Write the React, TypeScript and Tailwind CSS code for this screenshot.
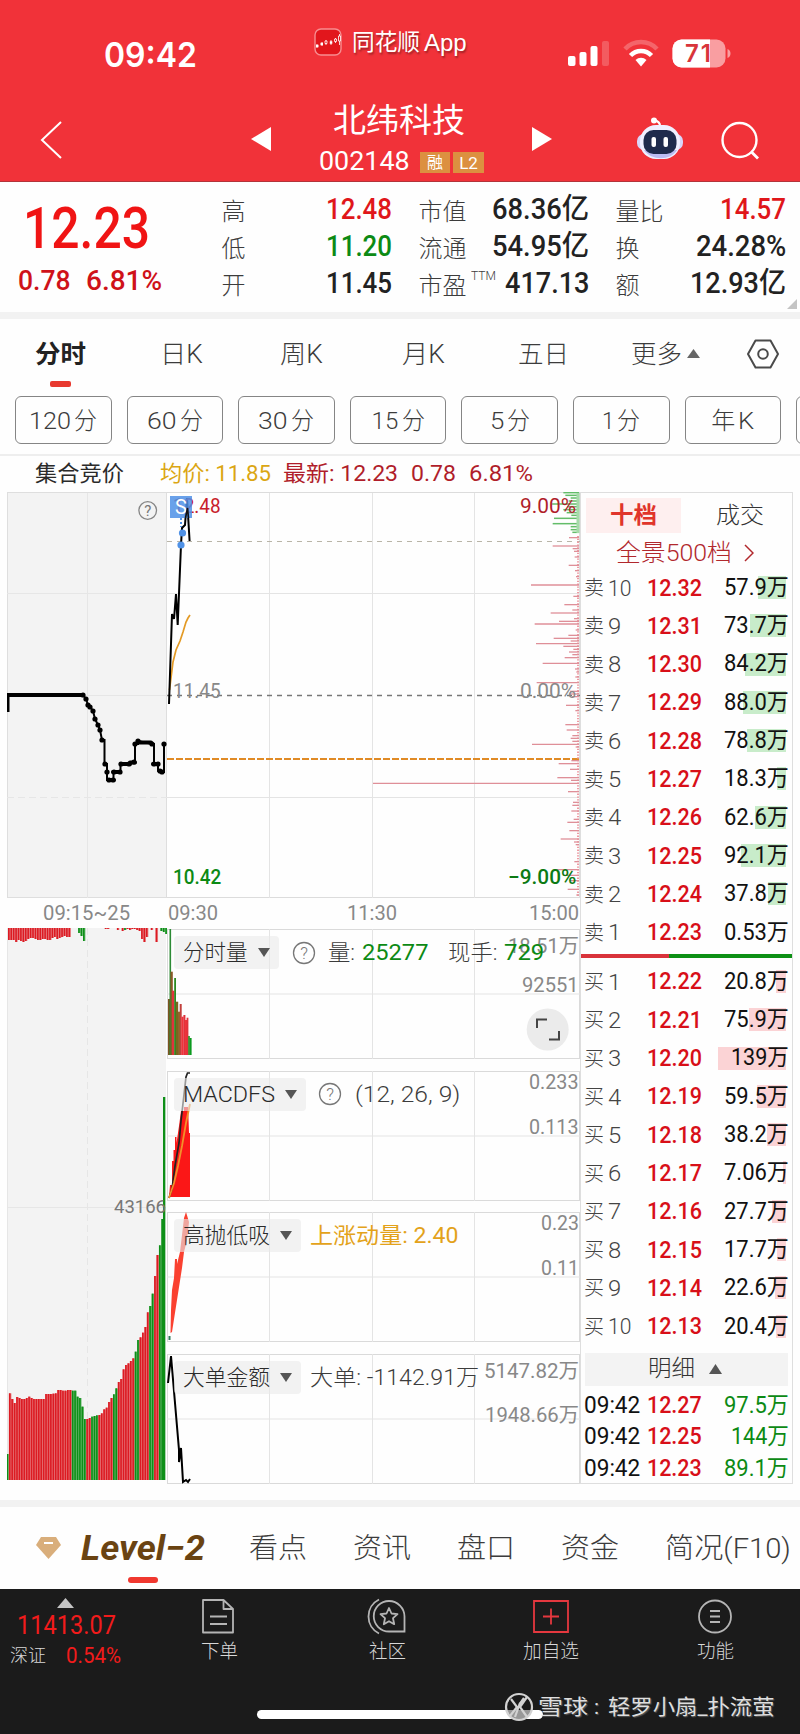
import { useLayoutEffect, useRef, useState, type ReactNode } from "react";
import clsx from "clsx";

const GRID = "#e4e4e4";

// text squeezed or stretched horizontally to a fixed width
function Fit({ w, className, children }: { w: number; className?: string; children: ReactNode }) {
  const ref = useRef<HTMLSpanElement>(null);
  const [scale, setScale] = useState(1);

  useLayoutEffect(() => {
    if (ref.current) setScale(w / ref.current.offsetWidth);
  }, [w, children]);

  return (
    <span className={clsx("block shrink-0 whitespace-nowrap", className)} style={{ width: w }}>
      <span ref={ref} className="inline-block origin-left" style={{ transform: `scaleX(${scale})` }}>
        {children}
      </span>
    </span>
  );
}

function Header() {
  return (
    <header className="h-[182px] shrink-0 bg-[#f13239] border-b border-[#b3343a] text-white">
      <div className="h-[95px] flex items-start">
        <Fit w={93} className="ml-[104px] mt-[35px] text-[34px] leading-[40px] font-semibold font-[Inter]">09:42</Fit>
        <svg className="ml-[117px] mt-[28px]" width="28" height="28" viewBox="0 0 28 28">
          <rect x="1" y="1" width="26" height="26" rx="6" fill="#e2161c" stroke="#f78d90" strokeWidth="1.4" />
          <path d="M3 16v4M8 14v4M12 12v5M17 12v5M21.500 10v5M25.500 6v11" stroke="#fff" strokeWidth=".8" />
          <path d="M2 18h2.500M6.500 16h2.500M15.800 14.500h2.500" stroke="#fff" strokeWidth="2.600" />
          <path d="M11 13h2v2.500h-2zM20.500 11h2v2.500h-2zM24.500 8h2v5h-2z" fill="#e2161c" stroke="#fff" strokeWidth=".8" />
        </svg>
        <div className="ml-[10px] mt-[28px] flex items-center leading-[30px] [text-shadow:1px_2px_2px_rgba(0,0,0,.35)]">
          <Fit w={68} className="text-[23px]">同花顺</Fit>
          <Fit w={43} className="ml-1 text-[24px] font-['Liberation_Sans']">App</Fit>
        </div>
        <svg className="ml-[101px] mt-[39px]" width="164" height="29" viewBox="0 0 164 29">
          <g fill="#fff">
            <rect x="0" y="17" width="7.500" height="10" rx="2" />
            <rect x="11.500" y="13" width="7" height="14" rx="2" />
            <rect x="22.500" y="7" width="7" height="20" rx="2" />
            <rect x="34" y="2" width="7" height="25" rx="2" opacity=".2" />
          </g>
          <path d="M57 10a22 22 0 0 1 32 0" fill="none" stroke="#fff" strokeWidth="4.500" opacity=".25" />
          <path d="M62.500 16.500a14.500 14.500 0 0 1 21 0" fill="none" stroke="#fff" strokeWidth="4.500" />
          <path d="M73 27.500l-5.500-6.500a8 8 0 0 1 11 0z" fill="#fff" />
          <rect x="104.500" y="0.500" width="53" height="28" rx="9" fill="#f99ea1" />
          <path d="M113.500 .5h28.500v28h-28.500a9 9 0 0 1-9-9v-10a9 9 0 0 1 9-9z" fill="#fff" />
          <path d="M159.500 10c4 1 4 8 0 9z" fill="#f99ea1" />
          <text x="117" y="23" fontFamily="Inter" fontWeight="600" fontSize="24" textLength="26" fill="#d8353b">71</text>
        </svg>
      </div>
      <div className="h-[86px] flex items-center">
        <svg className="ml-[40px] mt-[4px]" width="24" height="40" viewBox="0 0 24 40" fill="none" stroke="#fff" strokeWidth="2">
          <path d="M21 2L2 20l19 18" />
        </svg>
        <svg className="ml-[187px] mt-[2px]" width="21" height="26" viewBox="0 0 21 26"><path d="M20 1v24L0 13z" fill="#fff" /></svg>
        <div className="ml-[47px] w-[166px]">
          <Fit w={132} className="ml-[14px] text-[33px] leading-[44px]">北纬科技</Fit>
          <div className="mt-[3px] flex items-center h-[31px]">
            <Fit w={91} className="text-[26px]">002148</Fit>
            <span className="ml-[10px] mt-[2px] w-[30px] h-[21px] bg-[#dc9040] text-[16px] leading-[21px] text-center">融</span>
            <span className="ml-[3px] mt-[2px] w-[31px] h-[21px] bg-[#dc9040] text-[17px] leading-[22px] text-center">L2</span>
          </div>
        </div>
        <svg className="ml-[46px] mt-[2px]" width="21" height="26" viewBox="0 0 21 26"><path d="M1 1v24l20-12z" fill="#fff" /></svg>
        <svg className="ml-[84px] mt-[1px]" width="48" height="44" viewBox="0 0 48 44">
          <path d="M24 9c0-3-2-5-6-6" fill="none" stroke="#fff" strokeWidth="2.200" />
          <circle cx="18" cy="3.500" r="3" fill="#fff" />
          <rect x="1" y="17" width="46" height="16" rx="7" fill="#d9d6fa" />
          <rect x="4" y="8" width="40" height="34" rx="16" fill="#f0f0ff" />
          <path d="M8 33c7 11 27 11 33 0z" fill="#bcbcf2" />
          <rect x="7.500" y="13" width="33" height="24" rx="10" fill="#1f2b4c" />
          <rect x="15.500" y="20" width="4.500" height="10" rx="2" fill="#fff" />
          <rect x="27.500" y="20" width="4.500" height="10" rx="2" fill="#fff" />
        </svg>
        <svg className="ml-[35px] mt-[5px]" width="42" height="42" viewBox="0 0 42 42" fill="none" stroke="#fff" strokeWidth="2.400">
          <circle cx="20.500" cy="20" r="17" />
          <path d="M32 31.500l7 7" strokeWidth="2.800" />
        </svg>
      </div>
    </header>
  );
}

type Stat = { label: string; value: string; w: number; tone?: string; sup?: boolean };
const STATS: Stat[][] = [
  [
    { label: "高", value: "12.48", w: 66, tone: "text-[#e0161a]" },
    { label: "低", value: "11.20", w: 66, tone: "text-[#0c8a14]" },
    { label: "开", value: "11.45", w: 66 },
  ],
  [
    { label: "市值", value: "68.36亿", w: 97 },
    { label: "流通", value: "54.95亿", w: 97 },
    { label: "市盈", value: "417.13", w: 84, sup: true },
  ],
  [
    { label: "量比", value: "14.57", w: 66, tone: "text-[#e0161a]" },
    { label: "换", value: "24.28%", w: 90 },
    { label: "额", value: "12.93亿", w: 96 },
  ],
];

function Quote() {
  return (
    <section className="relative h-[130px] shrink-0 flex">
      <div className="w-[223px] pl-[18px]">
        <Fit w={127} className="ml-[5px] mt-[15px] text-[58px] leading-[62px] font-medium text-[#f01414]">12.23</Fit>
        <div className="mt-[6px] flex text-[28px] leading-[32px] font-medium text-[#cf1219]">
          <Fit w={53}>0.78</Fit>
          <Fit w={76} className="ml-[15px]">6.81%</Fit>
        </div>
      </div>
      <div className="flex gap-7 pt-[9px]">
        {STATS.map((col, i) => (
          <div key={i} className="w-[169px]">
            {col.map((s) => (
              <div key={s.label} className="h-[37px] flex items-center justify-between">
                <span className="-ml-[1.500px] mt-[4px] text-[24px] leading-[30px] text-[#3c3c3c] font-light flex">
                  {s.label}
                  {s.sup && <Fit w={25} className="ml-[4px] -mt-[10px] text-[13px]">TTM</Fit>}
                </span>
                <Fit w={s.w} className={clsx("text-[29px] leading-[37px] font-medium", s.tone ?? "text-[#222]")}>{s.value}</Fit>
              </div>
            ))}
          </div>
        ))}
      </div>
      <svg className="absolute right-[3px] bottom-[3px]" width="10" height="10" viewBox="0 0 10 10"><path d="M10 0v10H0z" fill="#c4c4c4" /></svg>
    </section>
  );
}

const PERIODS = [
  { num: "120", unit: "分", w: 42 },
  { num: "60", unit: "分", w: 30 },
  { num: "30", unit: "分", w: 30 },
  { num: "15", unit: "分", w: 27 },
  { num: "5", unit: "分", w: 14 },
  { num: "1", unit: "分", w: 12 },
];

function Periods() {
  return (
    <section className="shrink-0 border-t-[7px] border-[#f2f2f2] text-[#3c3c3c]">
      <div className="relative h-[77px] flex items-start pt-[19px] text-[25px] leading-[34px] font-light">
        <Fit w={51} className="ml-[35px] font-bold text-[#222]">分时</Fit>
        <Fit w={43} className="ml-[74px]">日K</Fit>
        <Fit w={43} className="ml-[77px]">周K</Fit>
        <Fit w={43} className="ml-[79px]">月K</Fit>
        <Fit w={51} className="ml-[73px]">五日</Fit>
        <Fit w={51} className="ml-[62px]">更多</Fit>
        <svg className="ml-[5px] mt-[11px]" width="13" height="9" viewBox="0 0 13 9"><path d="M6.500 0L13 9H0z" fill="#666" /></svg>
        <svg className="ml-[46px]" width="34" height="32" viewBox="0 0 34 32" fill="none" stroke="#4a4a4a" strokeWidth="2">
          <path d="M9.500 2.500h15L32 16l-7.500 13.500h-15L2 16z" strokeLinejoin="round" />
          <circle cx="17" cy="16" r="4.800" />
        </svg>
        <span className="absolute left-[50px] top-[62px] w-[21px] h-[6px] rounded-[2px] bg-[#e8392f]" />
      </div>
      <div className="h-[58px] pl-[15px] flex gap-[15px] overflow-hidden">
        {PERIODS.map((p) => (
          <div key={p.num} className="w-[96.600px] h-[48px] pt-[1px] shrink-0 flex items-center justify-center gap-[3px] rounded-md border border-[#858585] text-[24px] font-light">
            <Fit w={p.w}>{p.num}</Fit>
            <Fit w={23}>{p.unit}</Fit>
          </div>
        ))}
        <div className="w-[96.600px] h-[48px] pt-[1px] shrink-0 flex items-center justify-center gap-[3px] rounded-md border border-[#858585] text-[24px] font-light">
          <Fit w={24}>年</Fit>
          <Fit w={16}>K</Fit>
        </div>
        <div className="w-[96px] h-[48px] shrink-0 rounded-md border border-[#858585]" />
      </div>
      <div className="h-[38px] flex items-center border-t-2 border-[#eeeeee] text-[22px] leading-[36px]">
        <Fit w={89} className="ml-[35px] text-[#2a2a2a]">集合竞价</Fit>
        <Fit w={111} className="ml-[36px] text-[#dba613]">均价: 11.85</Fit>
        <Fit w={115} className="ml-[12px] text-[#b01d2a]">最新: 12.23</Fit>
        <Fit w={45} className="ml-[13px] text-[#b01d2a]">0.78</Fit>
        <Fit w={64} className="ml-[13px] text-[#b01d2a]">6.81%</Fit>
      </div>
    </section>
  );
}

// coordinates inside chart drawings are page pixels; each svg shifts them with its viewBox
const AUCTION_DOTS = [
  [83, 695], [86, 699], [88, 705], [90, 707], [93, 711], [95, 719], [98, 725], [100, 730], [102, 740], [105, 764],
  [107, 772], [109, 780], [113, 780], [114, 772], [120, 772], [121, 764], [129, 764], [134, 762], [135, 744], [138, 741],
  [152, 744], [154, 764], [158, 764], [160, 771], [162, 772], [164, 744],
];

function AuctionPrice() {
  return (
    <svg className="block" width="160" height="406" viewBox="7 492 160 406">
      <rect x="7" y="493" width="160" height="405" fill="#f3f3f3" />
      <g stroke="#e6e6e6" fill="none">
        <path d="M7 492.500H167M7.500 493V898M166.500 493V898M7 897.500H167" stroke="#dedede" />
        <path d="M7 593.500H167M7 695.500H167M87.500 493V898" />
        <path d="M7 797.500H167" strokeDasharray="7 4" />
      </g>
      <circle cx="147.700" cy="510.500" r="8.800" fill="none" stroke="#858585" strokeWidth="1.300" />
      <text x="147.700" y="516" textAnchor="middle" fontSize="15" fontFamily="Roboto" fill="#777">?</text>
      <path d="M8 712V695" stroke="#000" strokeWidth="3" />
      <path d="M7 695H83" stroke="#000" strokeWidth="4" />
      <path
        d="M83 695L86 699 88 705 90 707 93 711 95 719 98 725 100 730 102 740H104.500V764H107V772 780H113.500V772H120.500V764H129L135 762V744H138V741L152 744H154V764H158V771L162 772H164V744"
        fill="none" stroke="#000" strokeWidth="2"
      />
      <path d="M109 780h5M113 772h7M121 764h9M130 762.500h5M138 742.500h13M153 764h5" stroke="#000" strokeWidth="4" strokeLinecap="round" />
      {AUCTION_DOTS.map(([x, y], i) => (
        <circle key={i} cx={x} cy={y} r="2.600" />
      ))}
    </svg>
  );
}

const R = "#dc1a22";
const G = "#0d8f17";
// bar tops in thirds of a pixel, each with its colour letter
const AUCTION_TOPS =
  "762g 580r 597r 609r 591r 594r 597r 597r 594r 590r 594r 597r 597r 597r 597r 597r 582r 582r 582r 581r 580r 570r 570r 572r 572r 570r 570r 572g 572g 590g 594g 620g 657g 657r 654r 650g 648g 646g 645r 640r 628r 623r 606r 594r 583g 565g 546r 537r 508r 495r 490r 483r 475r 455g 420g 412r 398r 381r 337r 318g 281g 228r 165r 136g 57g";
const AUCTION_BARS = AUCTION_TOPS.split(" ").map((s, i) => ({
  x: 6.5 + i * 2.42,
  y: 1200 + parseInt(s) / 3,
  color: s.endsWith("g") ? G : R,
}));
const UNMATCHED = [
  12, 12, 12, 14, 12, 13, 14, 13, 11, 10, 10, 11, 12, 12, 11, 11, 12, 12, 10, 9, 11, 10, 9, 8, 9, 9,
  0, 0, 0, 5, 8, 13, 0, 0, 0, 0, 0, 0, 0, 0, 1, 1, 0, 0, 0, 2, 0, 3, 2, 1, 2, 1, 1, 2, 3, 11, 14, 9, 0, 2, 0, 14, 0, 3, 4, 6,
];
const unmatchedGreen = (i: number) => (i > 28 && i < 33) || i === 48 || i > 61;

function AuctionVolume() {
  return (
    <div className="relative">
      <svg className="block" width="160" height="556" viewBox="7 928 160 556">
        <rect x="7" y="928" width="159" height="552" fill="#f3f3f3" />
        <path d="M7.500 928V1480M7 1207.500H166" stroke="#e6e6e6" />
        <path d="M87.500 928V1480" stroke="#e6e6e6" strokeDasharray="7 4" />
        {UNMATCHED.map((h, i) => (
          <g key={i} fill={unmatchedGreen(i) ? G : R}>
            <rect x={8 + i * 2.42} y="928" width="2.420" height={h} opacity=".5" />
            <rect x={8 + i * 2.42} y="928" width="1.600" height={h} />
          </g>
        ))}
        {AUCTION_BARS.map((b, i) => (
          <g key={i} fill={b.color}>
            <rect x={b.x} y={b.y} width="2.420" height={1480 - b.y} opacity=".6" />
            <rect x={b.x} y={b.y} width="1.600" height={1480 - b.y} />
          </g>
        ))}
        <rect x="163" y="1097" width="2.300" height="383" fill={G} />
      </svg>
      <Fit w={52} className="absolute left-[107px] top-[267px] text-[18.500px] leading-[24px] text-[#777]">43166</Fit>
    </div>
  );
}

// price distribution ticks: [y, left edge], measured in thirds of a pixel
const SELL_TICKS = [[38, 850], [46, 856], [54, 872], [63, 866], [72, 815], [80, 862], [89, 850], [98, 860], [106, 874], [115, 822], [131, 818], [140, 872], [149, 872], [157, 877]];
const BUY_TICKS = [
  [173, 867], [198, 818], [206, 878], [214, 882], [231, 884], [256, 866], [272, 885], [290, 888], [315, 753], [349, 880],
  [374, 853], [390, 877], [399, 812], [416, 882], [424, 837], [432, 764], [450, 887], [466, 865], [475, 821], [483, 872],
  [491, 768], [499, 850], [508, 880], [516, 867], [524, 877], [533, 854], [550, 788], [567, 885], [576, 889], [591, 886],
  [608, 770], [634, 870], [642, 868], [650, 876], [676, 858], [692, 886], [734, 856], [750, 860], [767, 877], [775, 872],
  [784, 877], [793, 756], [801, 887], [842, 874], [851, 836], [868, 870], [893, 832], [901, 873], [910, 279], [935, 864],
  [967, 879], [976, 877], [993, 874], [1018, 881], [1027, 862], [1052, 868], [1077, 842], [1086, 882], [1094, 887],
  [1145, 883], [1169, 824], [1186, 850], [1202, 870], [1228, 863], [1245, 889],
];

function PriceChart() {
  return (
    <div className="relative h-[406px]">
      <svg className="block" width="413" height="406" viewBox="167 492 413 406">
        <path d="M167 492.500H580M167 897.500H580M579.500 492V898" stroke="#dcdcdc" fill="none" />
        <path d="M167 593.500H580M167 797.500H580M269.500 493V898M372.500 493V898M474.500 493V898" stroke={GRID} fill="none" />
        <path d="M167 541.500H580" stroke="#b9b5a8" strokeWidth="1.200" strokeDasharray="5 5" />
        <path d="M167 695.500H580" stroke="#777" strokeWidth="1.300" strokeDasharray="5 5" />
        <path d="M167 759H580" stroke="#e08a25" strokeWidth="2" strokeDasharray="7 2" />
        {SELL_TICKS.map(([y, x]) => (
          <path key={y} d={`M${280 + x / 3} ${480 + y / 3}H579`} stroke="#63bd69" strokeWidth="1.500" />
        ))}
        <path d="M578 493V533" stroke="#a5dba8" strokeWidth="3" />
        <path d="M578 536V896" stroke="#ee9aa2" strokeWidth="2" strokeDasharray="1.300 1.500" />
        {BUY_TICKS.map(([y, x]) => (
          <path key={y} d={`M${280 + x / 3} ${480 + y / 3}H579`} stroke="#df8f98" strokeWidth="1.300" />
        ))}
        <path d="M169.500 690L173 662 176 650 180 641 183 632 186 622 188 618 190 615" fill="none" stroke="#e39a25" strokeWidth="1.700" />
        <path d="M169 704L172 614 174 619 176 594 177.700 625 181 545 182 528 185 525 187 498 189.600 541" fill="none" stroke="#000" strokeWidth="2" />
        <circle cx="182.500" cy="533" r="3.600" fill="#4f91e6" />
        <circle cx="181" cy="545" r="3.600" fill="#4f91e6" />
        <path d="M181 518v9" stroke="#4f91e6" strokeWidth="2" strokeDasharray="2 2" />
      </svg>
      <Fit w={48} className="absolute left-[6px] top-[1px] text-[20.500px] leading-[26px] text-[#c8202b]">12.48</Fit>
      <span className="absolute left-[3px] top-[4px] w-[22px] h-[22px] bg-[#4f91e6]/85 text-white text-[20px] leading-[22px] text-center">S</span>
      <svg className="absolute left-[3px] top-[4px]" width="24" height="22" viewBox="170 496 24 22"><path d="M185.500 518L187.500 508 188.500 518" fill="none" stroke="#111" strokeWidth="1.600" /></svg>
      <Fit w={56} className="absolute right-[4px] top-[1px] text-[20.500px] leading-[26px] text-[#b01d2a]">9.00%</Fit>
      <Fit w={48} className="absolute left-[6px] top-[186px] text-[20.500px] leading-[26px] text-[#888]">11.45</Fit>
      <Fit w={56} className="absolute right-[4px] top-[186px] text-[20.500px] leading-[26px] text-[#888]">0.00%</Fit>
      <Fit w={48} className="absolute left-[6px] top-[372px] text-[20.500px] leading-[26px] font-medium text-[#0c8a14]">10.42</Fit>
      <Fit w={68} className="absolute right-[4px] top-[372px] text-[20.500px] leading-[26px] font-medium text-[#0c7a14]">−9.00%</Fit>
    </div>
  );
}

function HelpIcon({ className }: { className?: string }) {
  return (
    <svg className={clsx("shrink-0", className)} width="24" height="24" viewBox="0 0 24 24">
      <circle cx="12" cy="12" r="10.500" fill="none" stroke="#777" strokeWidth="1.300" />
      <text x="12" y="18" textAnchor="middle" fontSize="17" fontFamily="Roboto" fill="#777">?</text>
    </svg>
  );
}

type PaneProps = {
  top: number;
  tag: string;
  tagW: number;
  hi: string;
  hiW: number;
  hiTop: string;
  lo: string;
  loW: number;
  loTop: string;
  info?: ReactNode;
  children: ReactNode;
  last?: boolean;
};

function IndicatorPane({ top, tag, tagW, hi, hiW, hiTop, lo, loW, loTop, info, children, last }: PaneProps) {
  return (
    <div className={clsx("relative h-[130px]", !last && "mb-[11.700px]")}>
      <svg className="absolute inset-0" width="413" height="130" viewBox={`167 ${top} 413 130`}>
        <path d={`M167 ${top + 0.5}H580M167 ${top + 129.5}H580M167.500 ${top}v130M579.500 ${top}v130`} stroke="#dadada" fill="none" />
        <path d={`M167 ${top + 65}H580M269.500 ${top}v130M372.500 ${top}v130M474.500 ${top}v130`} stroke={GRID} fill="none" />
        {children}
      </svg>
      <div className="relative flex items-center pl-[7px] pt-[7px] text-[21.500px] leading-[33px] font-light text-[#3c3c3c]">
        <div className="h-[33px] flex items-center rounded bg-[#eaeaea]/60 pl-[9px] pr-[9px] text-[#2a2a2a]">
          <Fit w={tagW}>{tag}</Fit>
          <svg className="ml-[10px]" width="12" height="9" viewBox="0 0 12 9"><path d="M0 0h12L6 9z" fill="#555" /></svg>
        </div>
        {info}
      </div>
      <Fit w={hiW} className={clsx("absolute right-[1px] text-[20.500px] leading-[26px] text-[#888]", hiTop)}>{hi}</Fit>
      <Fit w={loW} className={clsx("absolute right-[1px] text-[20.500px] leading-[26px] text-[#888]", loTop)}>{lo}</Fit>
    </div>
  );
}

// [x, top, width, colour]
const VOLUME: [number, number, number, string][] = [
  [168, 999, 2, "#7c5420"],
  [169.5, 929, 1.6, "#2c8a35"],
  [170.5, 971.7, 2.3, "#8a5a28"],
  [172, 990.7, 2.4, "#e0333c"],
  [174.2, 978, 1.8, "#2a8a20"],
  [175.8, 1001.7, 2.4, "#7c6420"],
  [178, 1011.7, 2, "#8a6a28"],
  [179.7, 1004, 2, "#c2403c"],
  [181.4, 1016.7, 2.2, "#f0333c"],
  [183.4, 1015, 2, "#e0333c"],
  [185, 1020, 2, "#f0333c"],
  [186.6, 1017.7, 1.8, "#e0333c"],
  [188.2, 1036, 1.6, "#2a8a20"],
  [189.6, 1038, 2, "#0c9a20"],
];

function Charts() {
  return (
    <div className="flex">
      <div className="w-[160px]">
        <AuctionPrice />
        <div className="h-[30px] flex items-center pl-[36px]">
          <Fit w={87} className="text-[20.500px] text-[#888]">09:15~25</Fit>
        </div>
        <AuctionVolume />
      </div>
      <div className="w-[413px]">
        <PriceChart />
        <div className="h-[31px] flex items-center justify-between pl-[1px] pr-[1px] pb-[1px] text-[20.500px] text-[#888]">
          <Fit w={50}>09:30</Fit>
          <Fit w={50} className="-ml-[2px] mr-[2px]">11:30</Fit>
          <Fit w={50}>15:00</Fit>
        </div>
        <IndicatorPane
          top={929} tag="分时量" tagW={65} hi="18.51万" hiW={71} hiTop="top-[4px]" lo="92551" loW={57} loTop="top-[43px]"
          info={
            <>
              <HelpIcon className="ml-[13px]" />
              <Fit w={27} className="ml-[12px]">量:</Fit>
              <Fit w={66} className="ml-[7px] font-normal text-[#0c8a14]">25277</Fit>
              <Fit w={50} className="ml-[20px]">现手:</Fit>
              <Fit w={40} className="relative z-10 ml-[6px] font-normal text-[#0c8a14]">729</Fit>
            </>
          }
        >
          {VOLUME.map(([x, y, w, c]) => (
            <rect key={x} x={x} y={y} width={w} height={1055 - y} fill={c} />
          ))}
          <circle cx="547.700" cy="1029.500" r="21" fill="#ebebeb" />
          <path d="M537 1028v-8.500h10M559 1031v8.500h-10" fill="none" stroke="#444" strokeWidth="2" />
        </IndicatorPane>
        <IndicatorPane
          top={1070} tag="MACDFS" tagW={92} hi="0.233" hiW={50} hiTop="-top-[2px]" lo="0.113" loW={50} loTop="top-[43px]"
          info={
            <>
              <HelpIcon className="ml-[12px]" />
              <Fit w={105} className="ml-[13px]">(12, 26, 9)</Fit>
            </>
          }
        >
          <path d="M169 1196L170 1184H172V1160H173.500V1149H175V1136H176.500V1142L179 1125 181 1110H184V1106H188V1103L189 1132H190V1196z" fill="#fb1717" />
          <path d="M169 1197L172 1188 175 1165 179 1142 181 1120 183.500 1098 186 1076 187.500 1072H190" fill="none" stroke="#222" strokeWidth="1.700" />
          <path d="M169 1197L174 1182 178 1165 182 1145 186 1122 190 1103" fill="none" stroke="#f2902a" strokeWidth="1.800" />
        </IndicatorPane>
        <IndicatorPane
          top={1212} tag="高抛低吸" tagW={87} hi="0.23" hiW={38} hiTop="-top-[2px]" lo="0.11" loW={38} loTop="top-[43px]"
          info={<Fit w={148} className="ml-[9px] font-normal text-[#e3a21a]">上涨动量: 2.40</Fit>}
        >
          <path d="M170.500 1333L171 1310 172 1290 174 1278 175 1259H177V1264L180 1252 182 1235 184 1218 186 1212 189 1222 187 1240 184 1252 182 1268 177 1300 172 1332z" fill="#fa4130" />
          <path d="M169.500 1336v4" stroke="#2d7a5a" strokeWidth="2" />
        </IndicatorPane>
        <IndicatorPane
          last top={1354} tag="大单金额" tagW={87} hi="5147.82万" hiW={95} hiTop="top-[4px]" lo="1948.66万" loW={94} loTop="top-[48px]"
          info={<Fit w={169} className="ml-[9px]">大单: -1142.91万</Fit>}
        >
          <path d="M168 1383L171 1356 179 1450V1462L181 1448 183 1482 186 1480 188 1482 190 1479" fill="none" stroke="#000" strokeWidth="2" />
        </IndicatorPane>
      </div>
    </div>
  );
}

const ASKS: [string, string, number][] = [
  ["12.32", "57.9万", 57.9], ["12.31", "73.7万", 73.7], ["12.30", "84.2万", 84.2], ["12.29", "88.0万", 88], ["12.28", "78.8万", 78.8],
  ["12.27", "18.3万", 18.3], ["12.26", "62.6万", 62.6], ["12.25", "92.1万", 92.1], ["12.24", "37.8万", 37.8], ["12.23", "0.53万", 0],
];
const BIDS: [string, string, number][] = [
  ["12.22", "20.8万", 20.8], ["12.21", "75.9万", 75.9], ["12.20", "139万", 139], ["12.19", "59.5万", 59.5], ["12.18", "38.2万", 38.2],
  ["12.17", "7.06万", 7.06], ["12.16", "27.7万", 27.7], ["12.15", "17.7万", 17.7], ["12.14", "22.6万", 22.6], ["12.13", "20.4万", 20.4],
];
const TRADES = [["12.27", "97.5万"], ["12.25", "144万"], ["12.23", "89.1万"]];

function BookRow({ side, level, row, bar }: { side: string; level: number; row: [string, string, number]; bar: string }) {
  const [price, qty, volume] = row;
  return (
    <div className="relative h-[38.300px] flex items-center pl-[3px] pr-[3px]">
      <span className={clsx("absolute right-[6px] top-[7px] h-[23px]", bar)} style={{ width: volume * 0.489 }} />
      <span className="text-[20px] font-light text-[#444]">{side}</span>
      <Fit w={level === 10 ? 23 : 13} className="ml-[4px] text-[22px] font-light text-[#444]">{level}</Fit>
      <Fit w={55} className="absolute left-[66px] text-[23.500px] font-medium text-[#d80f18]">{price}</Fit>
      <Fit w={qty.length === 4 ? 58 : 65} className="relative ml-auto text-[23px] text-[#111]">{qty}</Fit>
    </div>
  );
}

function OrderBook() {
  return (
    <aside className="w-[213px] h-[992px] border border-[#dedede]">
      <div className="flex pl-[5px] pt-[5px] text-[23px] leading-[35px]">
        <div className="w-[95px] flex justify-center bg-[#feefef] font-bold text-[#e0352b]"><Fit w={47}>十档</Fit></div>
        <Fit w={48} className="ml-[35px] font-light text-[#333]">成交</Fit>
      </div>
      <div className="h-[36px] flex items-center pl-[35px] pt-[4px] text-[24px] font-light text-[#b1282d]">
        <Fit w={116}>全景500档</Fit>
        <svg className="ml-[12px]" width="10" height="18" viewBox="0 0 10 18" fill="none" stroke="#b1282d" strokeWidth="1.500"><path d="M1 1l8 8-8 8" /></svg>
      </div>
      {ASKS.map((row, i) => (
        <BookRow key={row[0]} side="卖" level={10 - i} row={row} bar="bg-[#c8ecca]" />
      ))}
      <div className="mt-[2px] mb-[5px] h-[4px] flex">
        <span className="w-[88px] bg-[#d9333b]" />
        <span className="flex-1 bg-[#0d9015]" />
      </div>
      {BIDS.map((row, i) => (
        <BookRow key={row[0]} side="买" level={i + 1} row={row} bar="bg-[#fbd3d5]" />
      ))}
      <div className="mx-[4px] mt-[7px] mb-[4px] h-[33px] flex items-center justify-center gap-[14px] pr-[3px] bg-[#f3f3f3] text-[23px] font-light text-[#333]">
        <Fit w={47}>明细</Fit>
        <svg width="13" height="10" viewBox="0 0 13 10"><path d="M6.500 0L13 10H0z" fill="#555" /></svg>
      </div>
      {TRADES.map(([price, qty]) => (
        <div key={price} className="relative h-[31.700px] flex items-center justify-between px-[3px] text-[23px]">
          <Fit w={56} className="text-[#111]">09:42</Fit>
          <Fit w={55} className="absolute left-[66px] font-medium text-[#d80f18]">{price}</Fit>
          <Fit w={qty.length === 4 ? 58 : 65} className="text-[#0c8a14]">{qty}</Fit>
        </div>
      ))}
    </aside>
  );
}

function InfoTabs() {
  return (
    <nav className="relative h-[89px] shrink-0 border-t-[7px] border-[#f2f2f2] flex items-center pt-[2px] text-[28px] font-light text-[#3c3c3c]">
      <svg className="ml-[36px] -mt-[2px]" width="25" height="22" viewBox="0 0 25 22">
        <path d="M5 0h15l5 8-12.500 14L0 8z" fill="#d9ae7b" />
        <path d="M8 6h9" stroke="#fff" strokeWidth="2" />
      </svg>
      <Fit w={124} className="ml-[20px] text-[35px] font-bold italic text-[#6a4312]">Level−2</Fit>
      <Fit w={58} className="ml-[44px]">看点</Fit>
      <Fit w={58} className="ml-[46px]">资讯</Fit>
      <Fit w={58} className="ml-[46px]">盘口</Fit>
      <Fit w={58} className="ml-[46px]">资金</Fit>
      <Fit w={126} className="ml-[46px]">简况(F10)</Fit>
      <span className="absolute left-[128px] top-[70px] w-[30px] h-[6px] rounded-[3px] bg-[#f0382f]" />
    </nav>
  );
}

function ToolItem({ label, w, className, children }: { label: string; w: number; className: string; children: ReactNode }) {
  return (
    <div className={clsx("flex flex-col items-center pt-[8px] text-[19px] leading-[30px] font-light text-[#d8d8d8]", className)}>
      <svg width="40" height="38" viewBox="0 0 40 38" fill="none" stroke="#b5b5b5" strokeWidth="1.800">{children}</svg>
      <Fit w={w} className="mt-[2px]">{label}</Fit>
    </div>
  );
}

function Footer() {
  return (
    <footer className="relative flex-1 bg-[#1b1b1b]">
      <div className="flex">
        <div className="w-[130px] pt-[9px] text-[#f21b1b]">
          <svg className="ml-[57px]" width="17" height="10" viewBox="0 0 17 10"><path d="M8.500 0L17 10H0z" fill="#c4c4c4" /></svg>
          <Fit w={99} className="ml-[17px] mt-[3px] text-[25px] leading-[30px]">11413.07</Fit>
          <div className="mt-[1px] flex items-center pl-[10px] leading-[28px]">
            <Fit w={36} className="text-[18px] text-[#d8d8d8] font-light">深证</Fit>
            <Fit w={55} className="ml-[20px] text-[22px]">0.54%</Fit>
          </div>
        </div>
        <ToolItem label="下单" w={37} className="ml-[67px] w-[44px]">
          <path d="M5 3h20.500l9.500 9v23.500H5zM25.500 3v9H35M12 19.500h17M12 27h17" transform="translate(-1 0)" strokeLinejoin="round" />
        </ToolItem>
        <ToolItem label="社区" w={37} className="ml-[124px] w-[44px]">
          <path d="M22 4a15.500 15.500 0 0 1 15.500 15.500v15H22a15.250 15.250 0 0 1 0-30.500z" />
          <path d="M12 2.500a19 19 0 0 0 0 34" />
          <path d="M22 11l2.500 5.500 6 .7-4.500 4 1.200 6-5.200-3-5.200 3 1.200-6-4.500-4 6-.7z" strokeLinejoin="round" />
        </ToolItem>
        <ToolItem label="加自选" w={56} className="ml-[112px] w-[60px]">
          <path d="M3 4h34v31H3zM12 19.500h16M20 11.500v16" stroke="#e5383f" />
        </ToolItem>
        <ToolItem label="功能" w={37} className="ml-[112px] w-[44px]">
          <circle cx="20" cy="19.500" r="16" />
          <path d="M15 14h10M15 19.500h10M15 25h10" />
        </ToolItem>
      </div>
      <div className="absolute left-[257px] top-[121px] w-[286px] h-[9px] rounded-full bg-white" />
      <div className="absolute left-[504px] top-[103px] flex items-center text-[21px] leading-[30px] text-[#dedede] [text-shadow:1px_1px_1px_#555]">
        <svg width="30" height="30" viewBox="0 0 30 30" fill="none" stroke="#d2d2d2" strokeWidth="2.200">
          <circle cx="15" cy="15" r="13" fill="#1b1b1b" fillOpacity=".45" />
          <path d="M7 7l6 8-7 9M23 5L16 15l7 10M16 11L11 25M20 6L15 13" />
        </svg>
        <Fit w={50} className="ml-[4px]">雪球</Fit>
        <span className="ml-[6px]">:</span>
        <Fit w={166} className="ml-[9px]">轻罗小扇_扑流萤</Fit>
      </div>
    </footer>
  );
}

export default function App() {
  return (
    <div className="w-[800px] h-[1734px] flex flex-col overflow-hidden bg-[#fefefe] font-[Roboto,'Noto_Sans_CJK_SC',sans-serif]">
      <Header />
      <Quote />
      <Periods />
      <main className="h-[1008px] shrink-0 flex pl-[7px]">
        <Charts />
        <OrderBook />
      </main>
      <InfoTabs />
      <Footer />
    </div>
  );
}
